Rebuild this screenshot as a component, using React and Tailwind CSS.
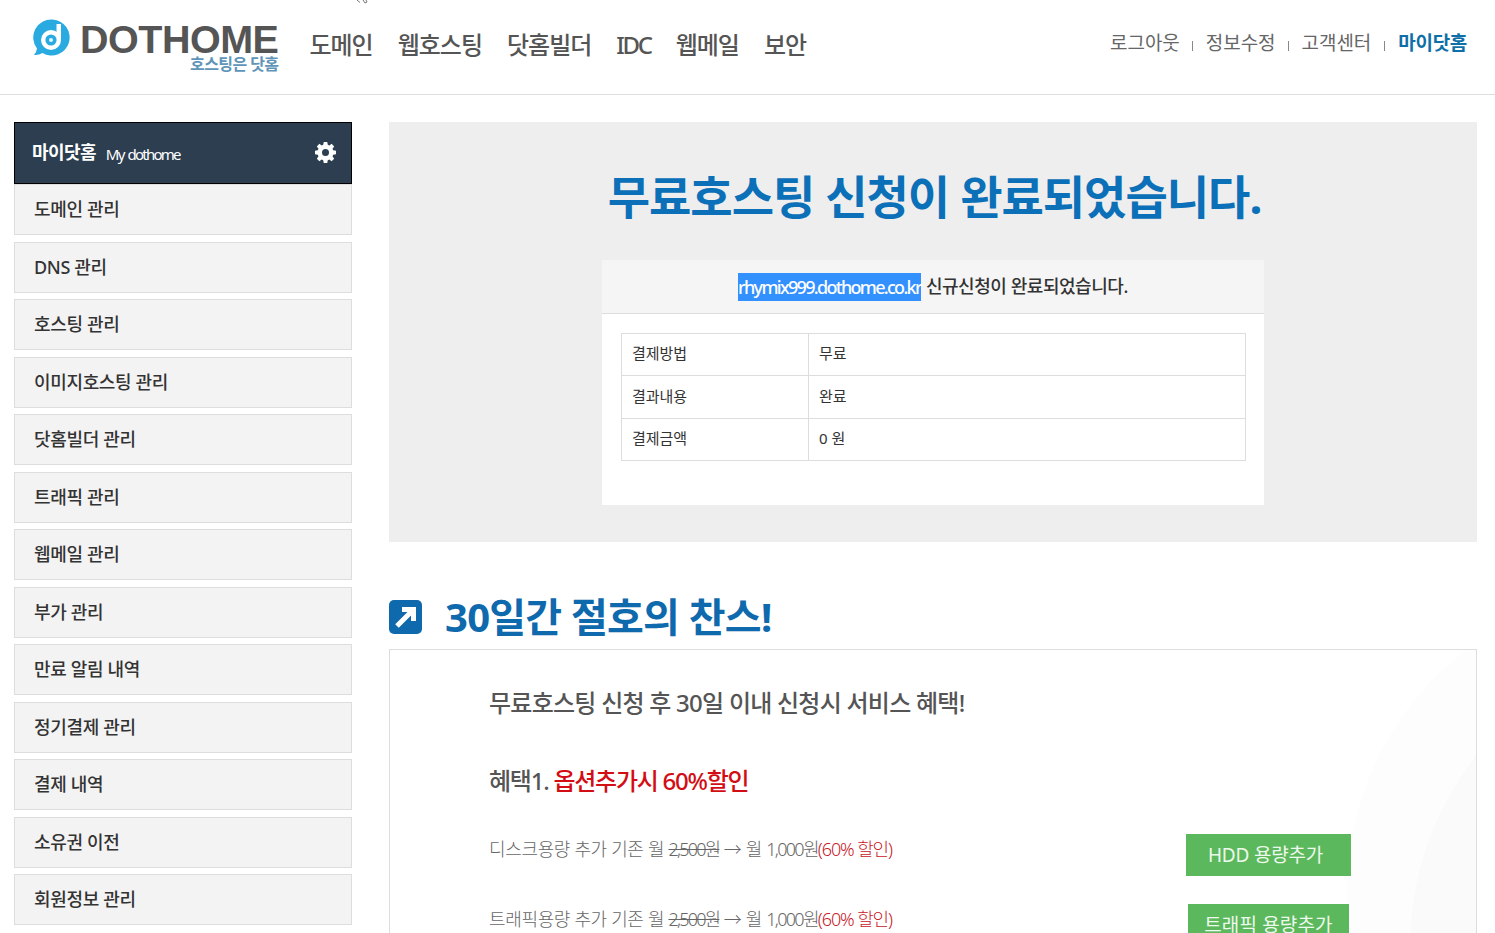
const sans = { fontFamily: '"Noto Sans", "Noto Sans CJK KR", sans-serif' };

const sideItems = [
  '도메인 관리', 'DNS 관리', '호스팅 관리', '이미지호스팅 관리', '닷홈빌더 관리', '트래픽 관리', '웹메일 관리',
  '부가 관리', '만료 알림 내역', '정기결제 관리', '결제 내역', '소유권 이전', '회원정보 관리',
];
const payRows = [['결제방법', '무료'], ['결과내용', '완료'], ['결제금액', '0 원']];

function Logo() {
  return (
    <div className="flex items-start">
      <svg width="38" height="38" viewBox="0 0 38 38" className="mt-[19px] ml-[1px] shrink-0">
        <path d="M19.5 0.5 A18 18 0 1 1 9.5 34 Q5.5 36.5 1 36 Q3.5 33.5 4 29.5 A18 18 0 0 1 19.5 0.5 Z" fill="#29aae1" />
        <circle cx="18" cy="21" r="10" fill="#fff" />
        <rect x="23.5" y="5" width="4.5" height="16" fill="#fff" />
        <circle cx="18" cy="21" r="5.6" fill="#29aae1" />
        <circle cx="18" cy="21" r="2" fill="#e6f5fc" />
      </svg>
      <div className="ml-[9px] mt-[23px] flex flex-col items-end">
        <div className="text-[39.5px] leading-[32px] font-bold tracking-[-0.5px] text-[#555555]" style={{ fontFamily: '"Liberation Sans", sans-serif' }}>DOTHOME</div>
        <div className="text-[16px] leading-[18px] font-bold tracking-[-0.6px] text-[#5f95b8]">호스팅은 닷홈</div>
      </div>
    </div>
  );
}

function Header() {
  return (
    <header className="relative flex h-[95px] shrink-0 items-start border-b border-[#dddddd] pl-[32px] pr-[28px]">
      {/* mouse pointer cut off by the top edge */}
      <svg width="12" height="5" viewBox="0 0 12 5" className="absolute left-[356px] top-0" fill="none" stroke="#777777" strokeWidth="1">
        <path d="M1 0 L4 2.5 M7 0 L9 3 L11 2 L10 0" />
      </svg>
      <Logo />
      <nav className="ml-[31px] mt-[27px] flex text-[24px] leading-[36px] font-medium tracking-[-1px] text-[#555555]">
        <span>도메인</span>
        <span className="ml-[25px]">웹호스팅</span>
        <span className="ml-[25px]">닷홈빌더</span>
        <span className="ml-[25px] tracking-[-2.3px]">IDC</span>
        <span className="ml-[25px]">웹메일</span>
        <span className="ml-[25px]">보안</span>
      </nav>
      <div className="ml-auto mt-[27px] flex items-center text-[19px] leading-[32px] tracking-[-0.05px] text-[#666666]">
        <span>로그아웃</span>
        <span className="mx-[12.5px] mt-[5px] h-[10px] w-px bg-[#888888]" />
        <span>정보수정</span>
        <span className="mx-[12.5px] mt-[5px] h-[10px] w-px bg-[#888888]" />
        <span>고객센터</span>
        <span className="mx-[13px] mt-[5px] h-[10px] w-px bg-[#888888]" />
        <span className="font-bold tracking-[-0.3px] text-[#0f6fa8]">마이닷홈</span>
      </div>
    </header>
  );
}

function Sidebar() {
  return (
    <aside className="w-[338px] shrink-0">
      <div className="flex h-[62px] items-center border border-black bg-[#2c3e50] pl-[17px] pr-[15px] text-white">
        <span className="-mt-[1px] text-[18px] font-bold tracking-[-0.6px]">마이닷홈</span>
        <span className="ml-[10px] mt-[3px] text-[15px] tracking-[-1.8px] [word-spacing:2px]">My dothome</span>
        <svg width="21" height="21" viewBox="0 0 24 24" className="ml-auto -mt-[2px]" fill="#fff">
          <path fillRule="evenodd" d="M10 1h4l.6 3.1 1.8.8L19 3.1 21.9 6 20 8.6l.8 1.8L24 11v4l-3.2.6-.8 1.8 1.9 2.6L19 22.9 16.4 21l-1.8.8L14 25h-4l-.6-3.2-1.8-.8L5 22.9 2.1 20 4 17.4l-.8-1.8L0 15v-4l3.2-.6.8-1.8L2.1 6 5 3.1l2.6 1.8 1.8-.8L10 1Zm2 8a4 4 0 1 0 0 8 4 4 0 0 0 0-8Z" transform="translate(0 -1)" />
        </svg>
      </div>
      <ul>
        {sideItems.map((item, i) => (
          <li
            key={item}
            className={`flex h-[51px] items-center border border-[#dddddd] bg-[#f3f3f3] pl-[19px] text-[18px] font-medium tracking-[-0.35px] text-[#333333] ${i > 0 ? 'mt-[6.5px]' : ''}`}
          >
            {item}
          </li>
        ))}
      </ul>
    </aside>
  );
}

function CompleteNotice() {
  return (
    <section className="flex h-[420px] flex-col items-center bg-[#eeeeee]">
      <h1 className="mt-[40px] h-[98px] pl-[3px] text-[46px] leading-[68px] font-bold tracking-[-1px] text-[#0b70b8]">무료호스팅 신청이 완료되었습니다.</h1>
      <div className="h-[245px] w-[662px] bg-white">
        <div className="flex h-[54px] items-center justify-center border-b border-[#dddddd] bg-[#f5f5f5] text-[18px] font-medium tracking-[-0.45px] text-[#333333]">
          <span className="bg-[#3390ff] leading-[28px] tracking-[-1.7px] text-white">rhymix999.dothome.co.kr</span>
          <span className="ml-[5px]">신규신청이 완료되었습니다.</span>
        </div>
        <table className="ml-[19px] mt-[19px] w-[625px] table-fixed border-collapse text-[15px] tracking-[-0.05px] text-[#333333]">
          <tbody>
            {payRows.map(([label, value]) => (
              <tr key={label} className="h-[42.3px]">
                <td className="w-[187px] border border-[#dddddd] pb-[2px] pl-[10px]">{label}</td>
                <td className="border border-[#dddddd] pb-[2px] pl-[10px]">{value}</td>
              </tr>
            ))}
          </tbody>
        </table>
      </div>
    </section>
  );
}

function OfferLine({ name }) {
  return (
    <p className="mb-[12px] text-[18px] leading-[26px] font-light tracking-[-0.35px] text-[#666666]">
      {name} 추가 기존 월 <s className="tracking-[-1.8px]">2,500원</s> → 월 <span className="tracking-[-1.7px]">1,000원</span>
      <span className="tracking-[-1.1px] text-[#c8202a]">(60% 할인)</span>
    </p>
  );
}

function Benefits() {
  return (
    <section className="mt-[46px]">
      <div className="flex h-[61px] items-center pb-[3px]">
        <svg width="33" height="34" viewBox="0 0 33 34" className="shrink-0">
          <rect width="33" height="34" rx="5" fill="#0f69ad" />
          <path d="M8 26 L22 12 M13 9.5 H24.5 V21" fill="none" stroke="#fff" strokeWidth="5" />
        </svg>
        <h2 className="ml-[23px] text-[40px] leading-[56px] font-bold tracking-[-0.75px] text-[#0f69ad]">30일간 절호의 찬스!</h2>
      </div>
      <div className="relative h-[400px] overflow-hidden border border-[#dddddd] bg-white">
        <div className="absolute left-[957px] top-[-62px] h-[606px] w-[606px] rounded-full bg-[#fdfdfd]" />
        <div className="absolute left-[1020px] top-[-13px] h-[620px] w-[620px] rounded-full bg-[#fafafa]" />
        <div className="relative pl-[99px]">
          <h3 className="mt-[33px] text-[24px] leading-[40px] font-medium tracking-[-0.75px] text-[#555555]">무료호스팅 신청 후 30일 이내 신청시 서비스 혜택!</h3>
          <h4 className="mt-[38px] text-[24px] leading-[40px] font-medium tracking-[-1.25px] text-[#555555]">
            혜택1. <span className="text-[#d30d14]">옵션추가시 60%할인</span>
          </h4>
          <div className="mt-[33px] flex h-[42px] items-center">
            <OfferLine name="디스크용량" />
            <a className="ml-auto mr-[125px] flex h-[42px] w-[165px] items-center justify-center bg-[#5cb85c] pr-[6px] text-[19px] tracking-[-0.2px] text-[#eef9ee]">HDD 용량추가</a>
          </div>
          <div className="mt-[28px] flex h-[42px] items-center">
            <OfferLine name="트래픽용량" />
            <a className="ml-auto mr-[127px] flex h-[42px] w-[161px] items-center justify-center bg-[#5cb85c] text-[19px] tracking-[0.15px] text-[#eef9ee]">트래픽 용량추가</a>
          </div>
        </div>
      </div>
    </section>
  );
}

export default function App() {
  return (
    <div className="flex h-screen flex-col overflow-hidden bg-white" style={sans}>
      <Header />
      <div className="flex pl-[14px] pr-[18px] pt-[27px]">
        <Sidebar />
        <main className="ml-[37px] flex-1">
          <CompleteNotice />
          <Benefits />
        </main>
      </div>
    </div>
  );
}
